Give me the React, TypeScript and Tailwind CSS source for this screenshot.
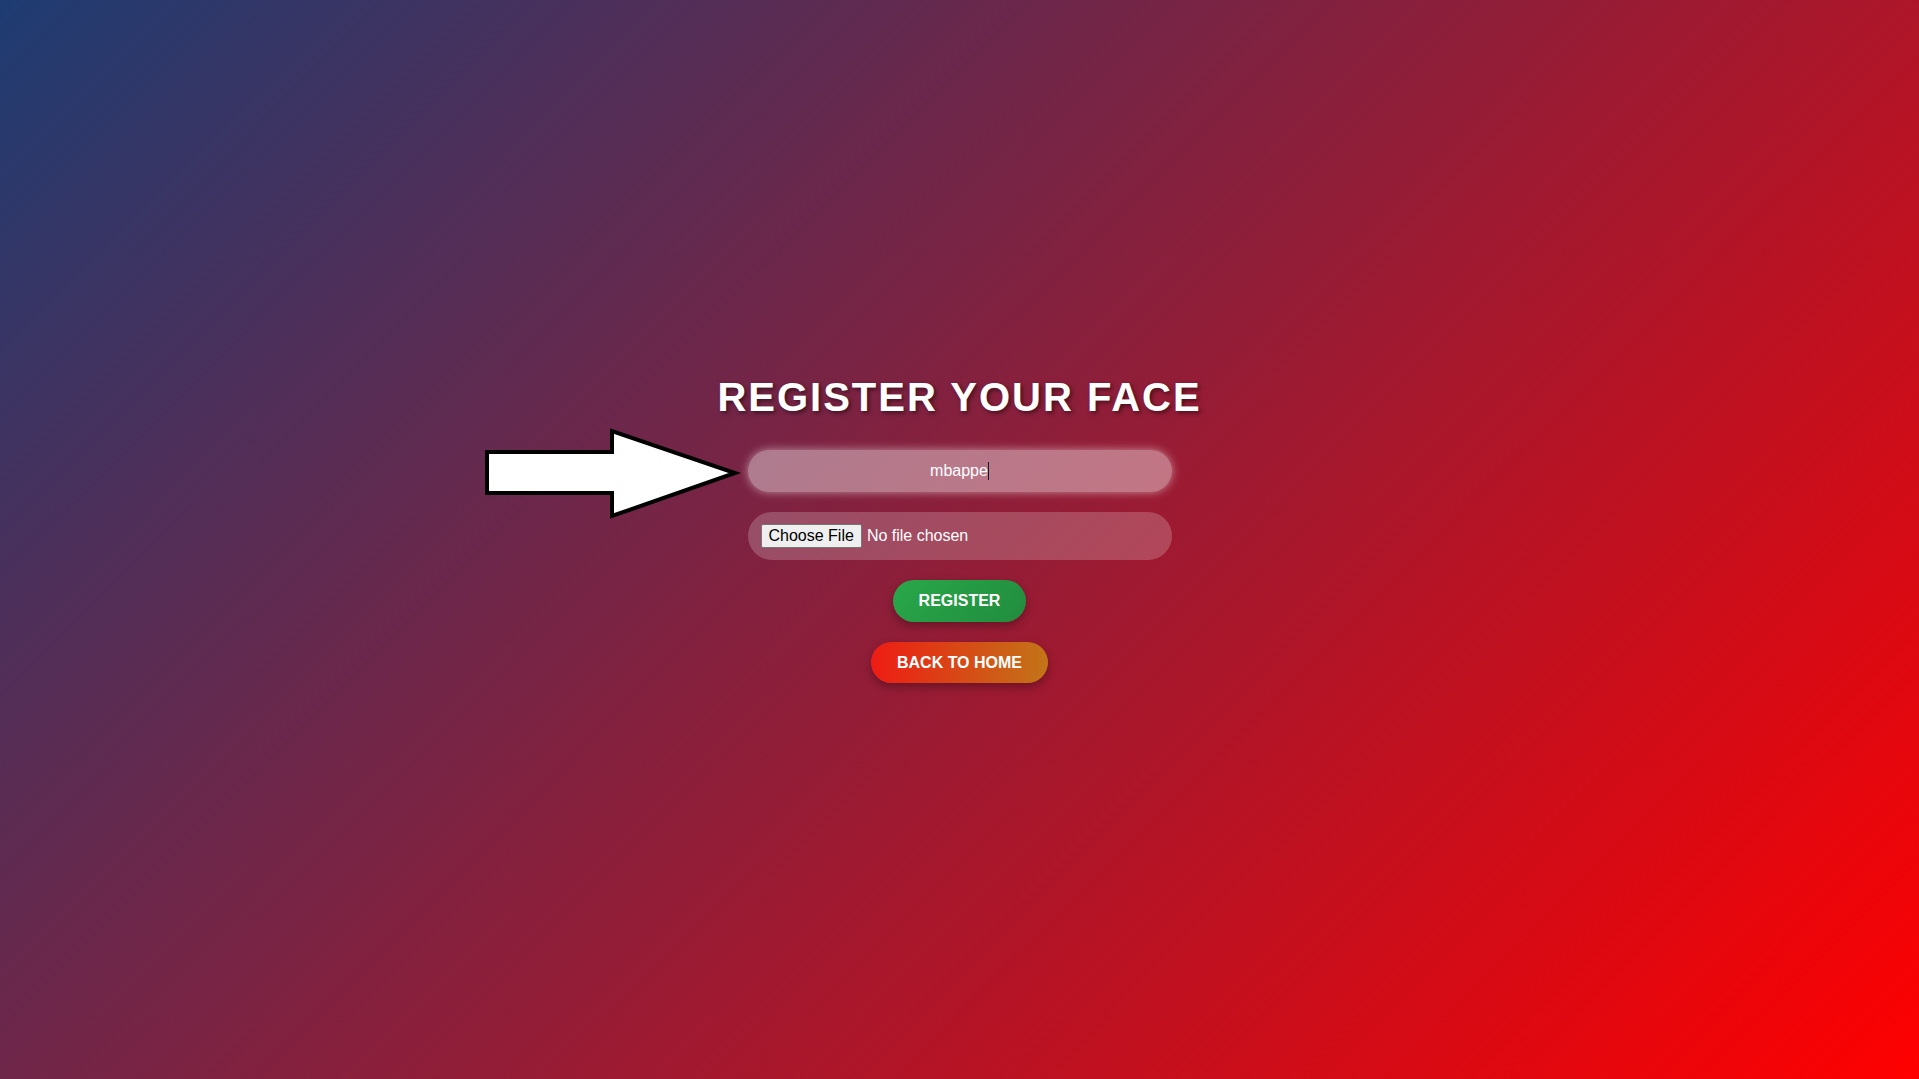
import React from "react";

function Arrow() {
  return (
    <svg
      width="262"
      height="98"
      viewBox="0 0 262 98"
      className="absolute left-[-268px] top-[-26px]"
    >
      <polygon
        points="7,28 132,28 132,7 255,49 132,92 132,69 7,69"
        fill="#ffffff"
        stroke="#000000"
        strokeWidth="4"
        strokeLinejoin="miter"
      />
    </svg>
  );
}

export default function App() {
  return (
    <div
      className="w-full h-screen flex flex-col items-center justify-center pb-[22px] bg-[linear-gradient(135deg,#1e3c72_0%,#ff0000_100%)]"
      style={{ fontFamily: "Arial, 'Liberation Sans', Helvetica, sans-serif" }}
    >
      <h2 className="text-[40px] font-bold text-white tracking-[2px] leading-[46px] mb-[30px] [text-shadow:2px_2px_4px_rgba(0,0,0,0.5)]">
        REGISTER YOUR FACE
      </h2>
      <div className="relative w-[424px]">
        <Arrow />
        <div className="w-full h-[42px] rounded-full bg-white/40 shadow-[0_0_10px_rgba(255,255,255,0.5)] flex items-center justify-center text-white text-[16px]">
          <span>mbappe</span>
          <span className="inline-block w-px h-[18px] bg-[#111827]" />
        </div>
      </div>
      <div className="w-[424px] mt-5 rounded-full bg-white/20 pl-[13px] pr-3 h-[48px] flex items-center">
        <input
          type="file"
          className="text-white text-[16px] leading-[24px] file:text-black file:bg-[#efefef] file:border file:border-solid file:border-[#767676] file:rounded-[2px] file:px-[7px] file:py-0 file:mr-[5px] file:text-[16px] file:h-[24px] file:leading-[20px]"
          style={{ fontFamily: "Arial, 'Liberation Sans', sans-serif" }}
        />
      </div>
      <button className="mt-5 h-[42px] px-[26px] rounded-full text-white font-bold text-[16px] bg-[linear-gradient(135deg,#29a84a,#218c3e)] shadow-[0_4px_10px_rgba(0,0,0,0.3)]">
        REGISTER
      </button>
      <button className="mt-5 h-[41px] px-[26px] rounded-full text-white font-bold text-[16px] bg-[linear-gradient(90deg,#ee1c14,#c27518)] shadow-[0_4px_10px_rgba(0,0,0,0.3)]">
        BACK TO HOME
      </button>
    </div>
  );
}
